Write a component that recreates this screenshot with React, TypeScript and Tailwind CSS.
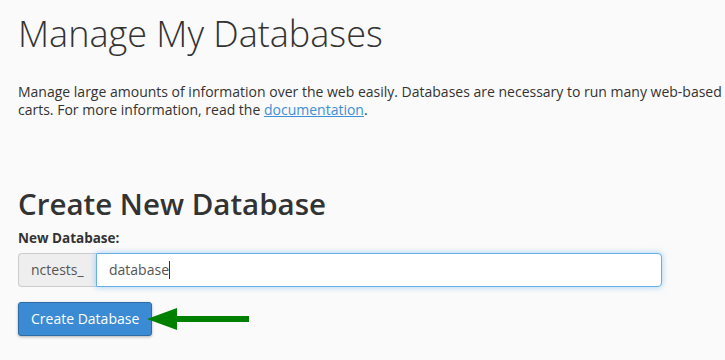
import React from "react";

function Arrow() {
  return (
    <svg width="104" height="22" viewBox="0 0 104 22" className="-ml-[5px] relative">
      <polygon points="0,11 30,0 30,22" fill="#008000" />
      <rect x="28" y="8" width="74" height="6" fill="#008000" />
    </svg>
  );
}

export default function App() {
  return (
    <div className="w-[725px] h-[360px] overflow-hidden bg-[#fafafa] font-['Open_Sans',sans-serif] text-[#333] pl-[18px]">
      <h1 className="pt-[14px] text-[36px] leading-[1.1] font-light">Manage My Databases</h1>
      <p className="mt-[29px] text-[14px] leading-[18px] whitespace-nowrap">
        Manage large amounts of information over the web easily. Databases are necessary to run many web-based applications, such as bulletin boards,
        <br />
        carts. For more information, read the{" "}
        <a href="#" className="text-[#3d8fd6] underline">
          documentation
        </a>
        .
      </p>
      <h2 className="mt-[68px] text-[29.5px] leading-[33px] font-semibold">Create New Database</h2>
      <label className="block mt-[9px] text-[13.5px] leading-[18px] font-bold">New Database:</label>
      <div className="mt-[6px] flex w-[644px] h-[34px]">
        <span className="flex items-center px-[12px] w-[78px] bg-[#eee] border border-[#ccc] border-r-0 rounded-l-[4px] text-[14px] text-[#555]">
          nctests_
        </span>
        <div className="flex-1 flex items-center px-[12px] bg-white border border-[#66afe9] rounded-r-[4px] shadow-[0_0_6px_rgba(102,175,233,0.6)] text-[14px] text-[#555]">
          database
          <span className="inline-block w-px h-[18px] bg-[#333]" />
        </div>
      </div>
      <div className="mt-[15px] flex items-center">
        <button className="h-[34px] px-[12px] bg-[#3a8bd4] border border-[#2e6da4] rounded-[3px] text-white text-[14px] shadow-[0_1px_3px_rgba(0,0,0,0.3)]">
          Create Database
        </button>
        <Arrow />
      </div>
    </div>
  );
}
